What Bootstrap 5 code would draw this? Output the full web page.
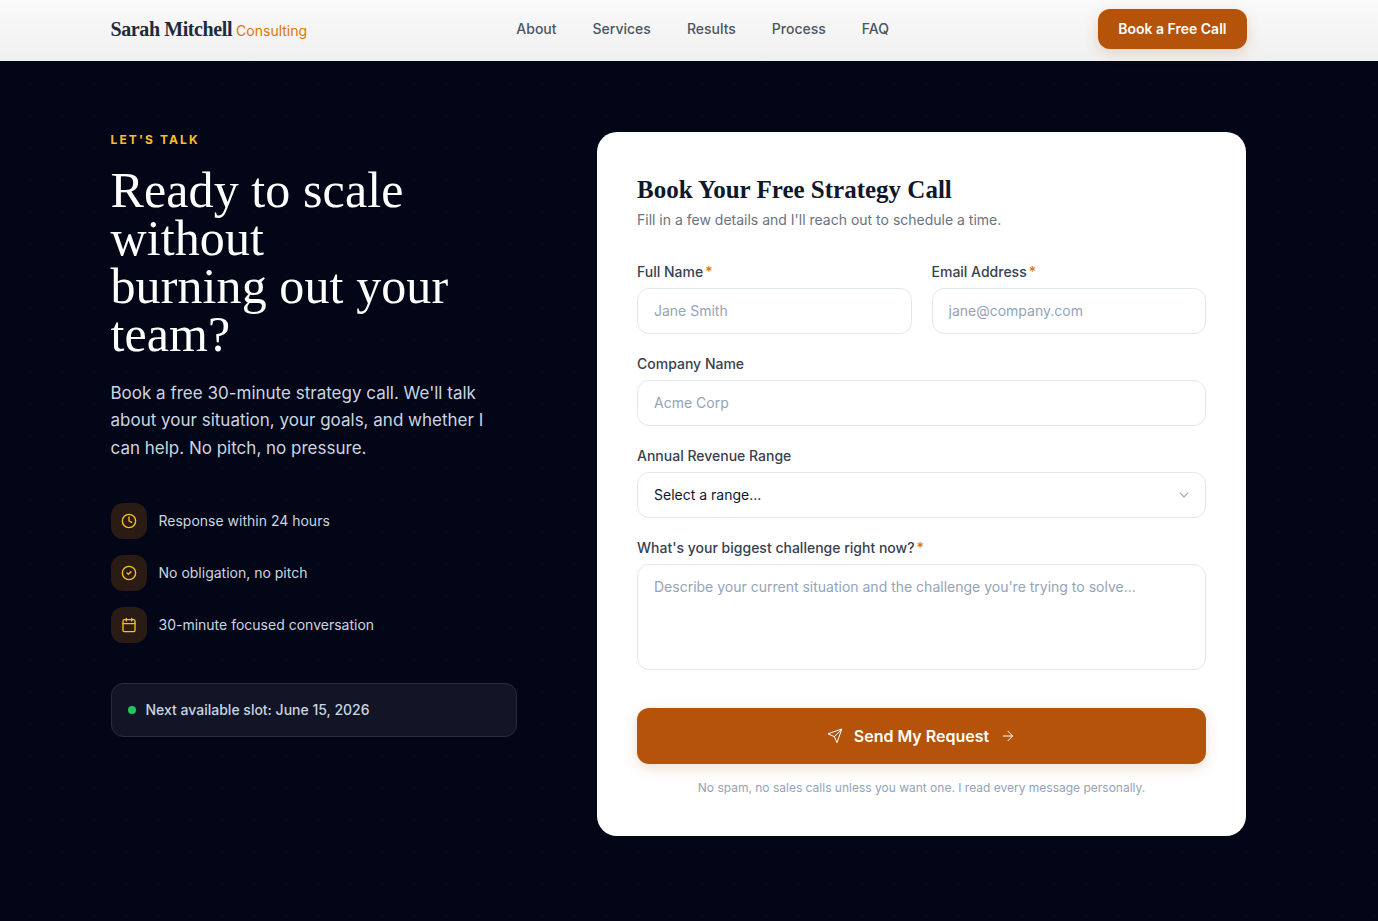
<!DOCTYPE html>
<html lang="en">
<head>
<meta charset="utf-8">
<title>Sarah Mitchell Consulting</title>
<link href="https://cdn.jsdelivr.net/npm/bootstrap@5.3.0/dist/css/bootstrap.min.css" rel="stylesheet">
<style>
html,body{height:100%}
body{font-family:Inter,"Liberation Sans",sans-serif;background-color:#020617;background-image:radial-gradient(rgba(255,255,255,.022) 1px,transparent 1px);background-size:32px 32px;background-position:14px 4px;color:#0f172a;padding-right:21px}
.top-bar{height:61px;margin-right:-21px;padding-right:21px;padding-bottom:3px;background:linear-gradient(180deg,#fafafa,#f0f0f0)}
.wrap-main{width:1136px;margin:0 auto;max-width:none;padding:0}
.brand-name{font-family:"Liberation Serif",serif;font-weight:700;font-size:20px;color:#1e293b;letter-spacing:-.4px}
.brand-sub{font-size:14px;color:#d97706;margin-left:4px}
.menu-link{font-size:14px;font-weight:500;color:#4b5563;text-decoration:none}
.menu-row{gap:36px;margin-bottom:2px}
.cta-top{background:#b45309;color:#fff;font-size:14px;font-weight:600;border-radius:12px;height:40px;padding:0 20px 2px;border:0;box-shadow:0 4px 14px rgba(180,83,9,.2)}
.hero-area{display:flex;justify-content:space-between;align-items:flex-start;padding-top:71px}
.left-col{width:406px}
.eyebrow{font-size:12px;font-weight:700;letter-spacing:2.1px;color:#fbbf24;line-height:15px;margin:0}
.hero-title{font-family:"Liberation Serif",serif;font-weight:400;font-size:50px;line-height:48px;color:#fff;margin:19px 0 0;letter-spacing:.1px}
.hero-lead{font-size:17px;line-height:27.5px;color:#cbd5e1;margin:21.7px 0 0}
.perk-list{margin-top:40.6px;gap:16px}
.perk-icon{width:36px;height:36px;border-radius:12px;background:#2a1b14;color:#fbbf24}
.perk-text{font-size:14px;color:#cbd5e1}
.slot-box{margin-top:40px;height:54px;background:#111526;border:1px solid #272b3c;border-radius:12px;padding:0 16px;font-size:14px;font-weight:500;color:#cbd5e1}
.slot-dot{width:8px;height:8px;border-radius:50%;background:#22c55e;margin-right:10px}
.form-panel{width:649px;height:704px;margin-right:.5px;background:#fff;border-radius:20px;padding:40px}
.panel-title{font-family:"Liberation Serif",serif;font-weight:700;font-size:25px;line-height:36px;color:#0f172a;margin:0}
.panel-sub{font-size:14px;line-height:21px;color:#6b7280;margin:1px 0 0}
.field-label{font-size:14px;font-weight:500;line-height:20px;color:#374151;margin:0 0 6px;display:block}
.req{color:#d97706;margin-left:2px}
.field-input{height:46px;border:1px solid #e2e8f0;border-radius:12px;font-size:14px;color:#0f172a;padding:0 16px 2px;box-shadow:none}
.field-input::placeholder{color:#94a3b8;opacity:1}
.field-area{height:106px;padding:11px 16px;resize:none}
.field-select{background-position:right 15px center;background-size:12px 10px;background-image:url("data:image/svg+xml,%3csvg xmlns='http://www.w3.org/2000/svg' viewBox='0 0 16 16'%3e%3cpath fill='none' stroke='%2394a3b8' stroke-linecap='round' stroke-linejoin='round' stroke-width='2' d='m2 5 6 6 6-6'/%3e%3c/svg%3e")}
.field-row{margin-top:20px}
.field-first{margin-top:32px}
.pair-grid{display:grid;grid-template-columns:1fr 1fr;gap:20px}
.send-btn{width:100%;height:56px;background:#b45309;color:#fff;font-size:16px;font-weight:600;border:0;border-radius:12px;margin-top:38px;box-shadow:0 4px 14px rgba(180,83,9,.2);gap:11px}
.fine-print{font-size:12px;line-height:18px;color:#94a3b8;margin:15px 0 0;text-align:center}
</style>
</head>
<body>
<nav class="top-bar d-flex align-items-center">
  <div class="wrap-main d-flex align-items-center justify-content-between">
    <a href="#" class="text-decoration-none d-flex align-items-baseline"><span class="brand-name">Sarah Mitchell</span><span class="brand-sub">Consulting</span></a>
    <div class="d-flex menu-row">
      <a class="menu-link" href="#">About</a>
      <a class="menu-link" href="#">Services</a>
      <a class="menu-link" href="#">Results</a>
      <a class="menu-link" href="#">Process</a>
      <a class="menu-link" href="#">FAQ</a>
    </div>
    <button class="btn cta-top">Book a Free Call</button>
  </div>
</nav>
<main class="wrap-main hero-area">
  <section class="left-col">
    <p class="eyebrow">LET'S TALK</p>
    <h1 class="hero-title">Ready to scale without<br>burning out your team?</h1>
    <p class="hero-lead">Book a free 30-minute strategy call. We'll talk about your situation, your goals, and whether I can help. No pitch, no pressure.</p>
    <div class="d-flex flex-column perk-list">
      <div class="d-flex align-items-center gap-2"><span class="perk-icon d-flex align-items-center justify-content-center flex-shrink-0 me-1"><svg width="16" height="16" viewBox="0 0 24 24" fill="none" stroke="currentColor" stroke-width="2" stroke-linecap="round" stroke-linejoin="round"><circle cx="12" cy="12" r="10"/><path d="M12 6v6l4 2"/></svg></span><span class="perk-text">Response within 24 hours</span></div>
      <div class="d-flex align-items-center gap-2"><span class="perk-icon d-flex align-items-center justify-content-center flex-shrink-0 me-1"><svg width="16" height="16" viewBox="0 0 24 24" fill="none" stroke="currentColor" stroke-width="2" stroke-linecap="round" stroke-linejoin="round"><circle cx="12" cy="12" r="10"/><path d="m9 12 2 2 4-4"/></svg></span><span class="perk-text">No obligation, no pitch</span></div>
      <div class="d-flex align-items-center gap-2"><span class="perk-icon d-flex align-items-center justify-content-center flex-shrink-0 me-1"><svg width="16" height="16" viewBox="0 0 24 24" fill="none" stroke="currentColor" stroke-width="2" stroke-linecap="round" stroke-linejoin="round"><path d="M8 2v4M16 2v4"/><rect x="3" y="4" width="18" height="18" rx="2"/><path d="M3 10h18"/></svg></span><span class="perk-text">30-minute focused conversation</span></div>
    </div>
    <div class="slot-box d-flex align-items-center"><span class="slot-dot"></span>Next available slot: June 15, 2026</div>
  </section>
  <section class="form-panel">
    <h2 class="panel-title">Book Your Free Strategy Call</h2>
    <p class="panel-sub">Fill in a few details and I'll reach out to schedule a time.</p>
    <form>
      <div class="pair-grid field-first">
        <div><label class="field-label">Full Name<span class="req">*</span></label><input class="form-control field-input" placeholder="Jane Smith"></div>
        <div><label class="field-label">Email Address<span class="req">*</span></label><input class="form-control field-input" placeholder="jane@company.com"></div>
      </div>
      <div class="field-row"><label class="field-label">Company Name</label><input class="form-control field-input" placeholder="Acme Corp"></div>
      <div class="field-row"><label class="field-label">Annual Revenue Range</label><select class="form-select field-input field-select"><option>Select a range...</option></select></div>
      <div class="field-row"><label class="field-label">What's your biggest challenge right now?<span class="req">*</span></label><textarea class="form-control field-input field-area" placeholder="Describe your current situation and the challenge you're trying to solve..."></textarea></div>
      <button type="button" class="btn send-btn d-flex align-items-center justify-content-center"><svg width="16" height="16" viewBox="0 0 24 24" fill="none" stroke="currentColor" stroke-width="1.5" stroke-linecap="round" stroke-linejoin="round"><path d="M22 2 11 13"/><path d="M22 2 15 22l-4-9-9-4z"/></svg><span>Send My Request</span><svg width="16" height="16" viewBox="0 0 24 24" fill="none" stroke="currentColor" stroke-width="1.5" stroke-linecap="round" stroke-linejoin="round"><path d="M5 12h14"/><path d="m12 5 7 7-7 7"/></svg></button>
      <p class="fine-print">No spam, no sales calls unless you want one. I read every message personally.</p>
    </form>
  </section>
</main>
<script src="https://cdn.jsdelivr.net/npm/bootstrap@5.3.0/dist/js/bootstrap.bundle.min.js"></script>
</body>
</html>
